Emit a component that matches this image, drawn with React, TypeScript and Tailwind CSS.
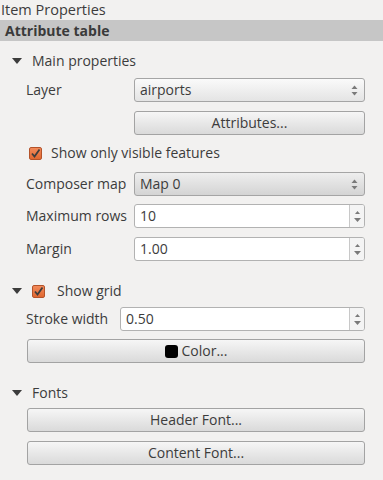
import React from "react";

const font = { fontFamily: '"Open Sans", "Noto Sans", sans-serif' };

function Arrow() {
  return (
    <svg width="10" height="6" viewBox="0 0 10 6" className="shrink-0">
      <path d="M0 0 L10 0 L5 6 Z" fill="#3c3c3c" />
    </svg>
  );
}

function UpDown() {
  return (
    <svg width="7" height="11" viewBox="0 0 7 11">
      <path d="M3.5 0.5 L6.5 4 L0.5 4 Z" fill="#7a7a7a" />
      <path d="M0.5 7 L6.5 7 L3.5 10.5 Z" fill="#7a7a7a" />
    </svg>
  );
}

function Check() {
  return (
    <div className="w-[13px] h-[13px] rounded-[2px] border border-[#b4532a] bg-gradient-to-b from-[#f28a5a] to-[#e0672f] flex items-center justify-center shrink-0">
      <svg width="11" height="11" viewBox="0 0 11 11">
        <path d="M2 5.5 L4.5 8.5 L9.5 1.5" stroke="#3d3d3d" strokeWidth="1.8" fill="none" />
      </svg>
    </div>
  );
}

function Combo({ value, grey }: { value: string; grey?: boolean }) {
  return (
    <div
      className={
        "flex-1 h-[24px] rounded-[3px] border border-[#a5a5a5] flex items-center pl-[5px] pr-[6px] " +
        (grey
          ? "bg-gradient-to-b from-[#eeeeee] to-[#d4d4d4]"
          : "bg-gradient-to-b from-[#fafafa] to-[#e4e4e4]")
      }
    >
      <span className="flex-1 text-[#3c3c3c]">{value}</span>
      <UpDown />
    </div>
  );
}

function Spin({ value }: { value: string }) {
  return (
    <div className="flex-1 h-[24px] rounded-[3px] border border-[#b2b2b2] bg-white flex items-stretch overflow-hidden">
      <span className="flex-1 flex items-center pl-[5px] text-[#3c3c3c]">{value}</span>
      <div className="w-[15px] border-l border-[#c8c8c8] bg-[#f4f4f4] flex flex-col items-center justify-center gap-[4px]">
        <svg width="5" height="3" viewBox="0 0 5 3">
          <path d="M2.5 0 L5 3 L0 3 Z" fill="#7a7a7a" />
        </svg>
        <svg width="7" height="4" viewBox="0 0 7 4">
          <path d="M0 0 L7 0 L3.5 4 Z" fill="#7a7a7a" />
        </svg>
      </div>
    </div>
  );
}

function Button({ children }: { children: React.ReactNode }) {
  return (
    <div className="flex-1 h-[24px] rounded-[3px] border border-[#a3a3a3] bg-gradient-to-b from-[#f6f6f6] to-[#dadada] flex items-center justify-center text-[#3c3c3c]">
      {children}
    </div>
  );
}

export default function App() {
  return (
    <div
      className="w-[383px] h-[480px] bg-[#f2f1f0] text-[14px] leading-[18px] text-[#3c3c3c] overflow-hidden flex flex-col"
      style={font}
    >
      <div className="h-[20px] flex items-center pl-[1px] text-[14.5px] leading-none">Item Properties</div>
      <div className="h-[21px] bg-[#c6c6c6] flex items-center pl-[5px] font-bold text-[14px] text-[#3a3a3a]">
        Attribute table
      </div>

      <div className="mt-[11px] h-[18px] flex items-center pl-[12px] gap-[10px]">
        <Arrow />
        <span>Main properties</span>
      </div>

      <div className="pl-[26px] pr-[18px] flex flex-col">
        <div className="mt-[8px] flex items-center">
          <span className="w-[108px]">Layer</span>
          <Combo value="airports" />
        </div>
        <div className="mt-[9px] flex pl-[108px]">
          <Button>Attributes...</Button>
        </div>
        <div className="mt-[9px] h-[18px] flex items-center gap-[9px] pl-[3px]">
          <Check />
          <span>Show only visible features</span>
        </div>
        <div className="mt-[10px] flex items-center">
          <span className="w-[108px]">Composer map</span>
          <Combo value="Map 0" grey />
        </div>
        <div className="mt-[8px] flex items-center">
          <span className="w-[108px]">Maximum rows</span>
          <Spin value="10" />
        </div>
        <div className="mt-[9px] flex items-center">
          <span className="w-[108px]">Margin</span>
          <Spin value="1.00" />
        </div>
      </div>

      <div className="mt-[21px] h-[18px] flex items-center pl-[12px]">
        <Arrow />
        <div className="ml-[10px]">
          <Check />
        </div>
        <span className="ml-[12px]">Show grid</span>
      </div>

      <div className="pl-[26px] pr-[18px] flex flex-col">
        <div className="mt-[7px] flex items-center">
          <span className="w-[94px]">Stroke width</span>
          <Spin value="0.50" />
        </div>
        <div className="mt-[8px] flex pl-[1px]">
          <Button>
            <span className="w-[13px] h-[13px] rounded-[3px] bg-black mr-[4px]" />
            Color...
          </Button>
        </div>
      </div>

      <div className="mt-[21px] h-[18px] flex items-center pl-[12px] gap-[10px]">
        <Arrow />
        <span>Fonts</span>
      </div>

      <div className="pl-[27px] pr-[18px] flex flex-col">
        <div className="mt-[6px] flex">
          <Button>Header Font...</Button>
        </div>
        <div className="mt-[9px] flex">
          <Button>Content Font...</Button>
        </div>
      </div>
    </div>
  );
}
